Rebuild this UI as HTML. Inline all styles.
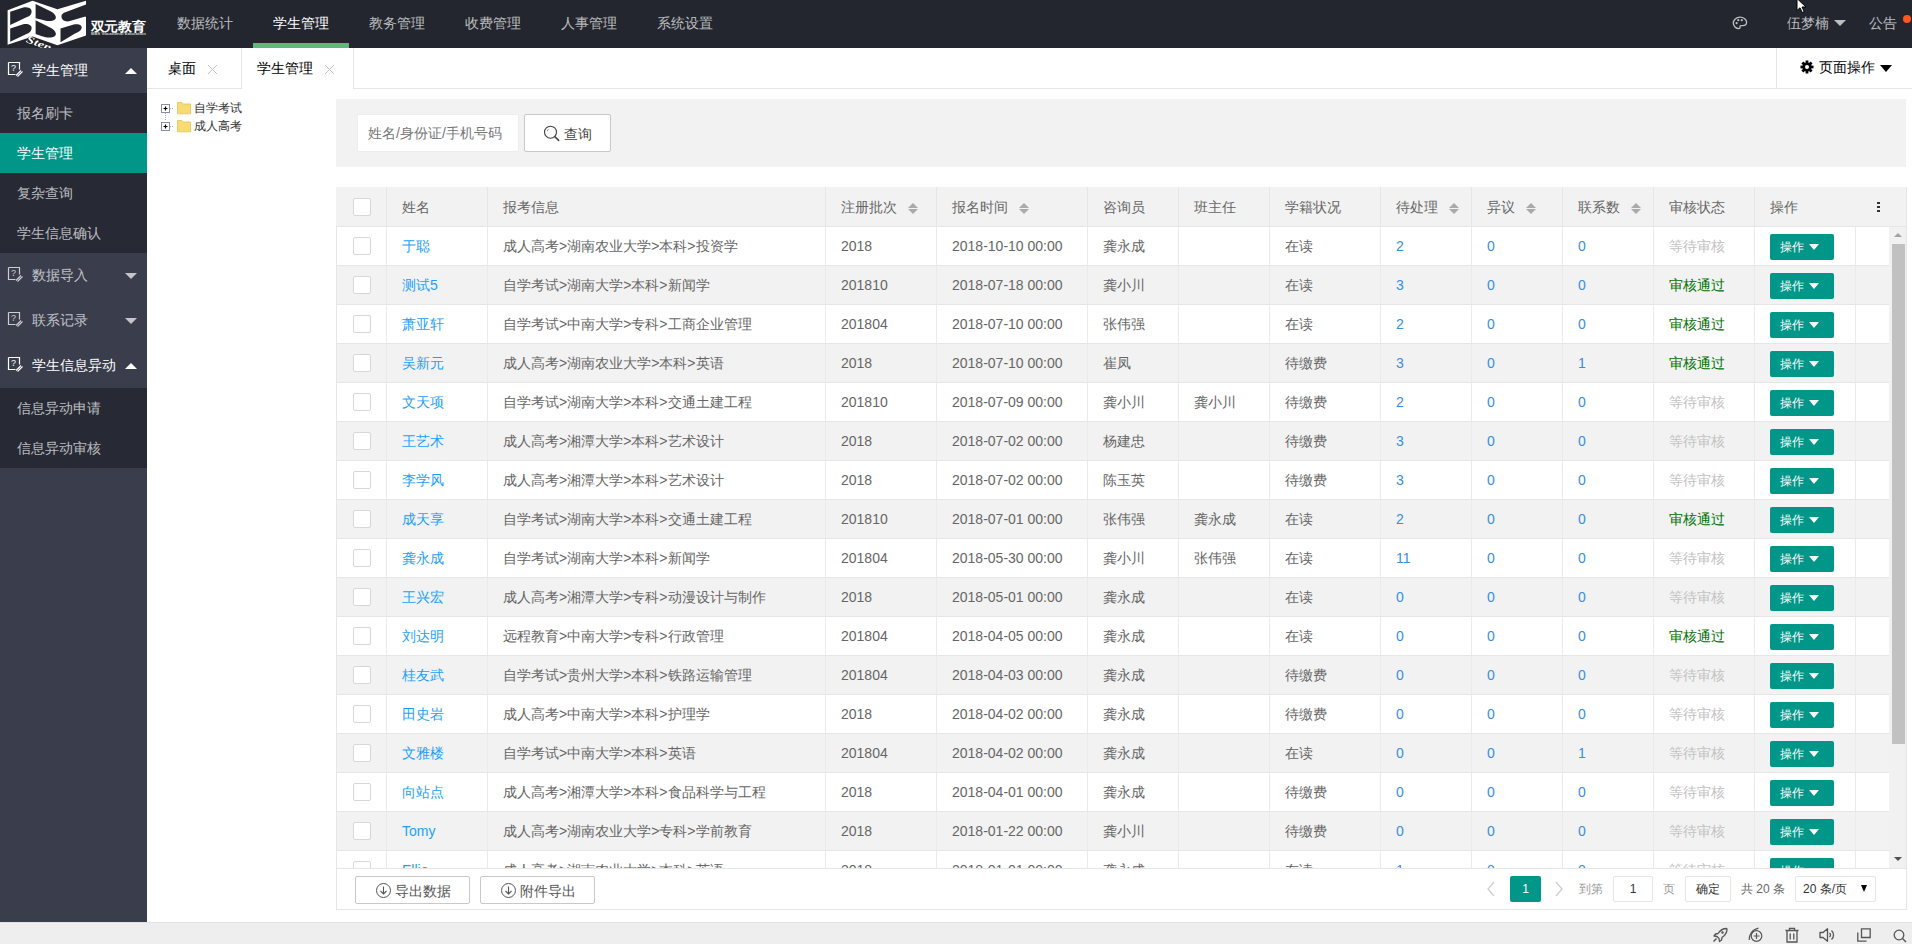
<!DOCTYPE html>
<html><head><meta charset="utf-8">
<style>
*{margin:0;padding:0;box-sizing:border-box}
html,body{width:1912px;height:944px;overflow:hidden;background:#fff;font-family:"Liberation Sans",sans-serif;font-size:14px;color:#666}
.abs{position:absolute}
#hdr{position:absolute;left:0;top:0;width:1912px;height:48px;background:#23262E}
.nav{position:absolute;top:0;height:48px;width:96px;line-height:46px;text-align:center;color:rgba(255,255,255,.7);font-size:14px}
.nav.on{color:#fff}
.nav.on:after{content:"";position:absolute;left:0;bottom:0;width:96px;height:5px;background:#5FB878}
#side{position:absolute;left:0;top:48px;width:147px;height:874px;background:#393D4C}
.pitem{position:absolute;left:0;width:147px;height:45px;line-height:45px;color:rgba(255,255,255,.7);font-size:14px}
.pitem.open{color:#fff}
.pitem span{position:absolute;left:32px;top:0}
.pitem svg{position:absolute;left:7px;top:13px}
.pitem .car{position:absolute;left:125px;top:20px;width:0;height:0;border-left:6px solid transparent;border-right:6px solid transparent}
.car.dn{border-top:6px solid rgba(255,255,255,.7)}
.car.up{border-bottom:6px solid #fff}
.citem{position:absolute;left:0;width:147px;height:40px;line-height:40px;padding-left:17px;color:rgba(255,255,255,.7);background:#272A35;font-size:14px}
.citem.on{background:#009688;color:#fff}
#foot{position:absolute;left:0;top:922px;width:1912px;height:22px;background:#eeeeee;border-top:1px solid #e2e2e2}
.thead{position:absolute;background:#f2f2f2}
.vl{position:absolute;width:1px;background:#e6e6e6}
.hl{position:absolute;height:1px;background:#e6e6e6}
.chk{position:absolute;width:18px;height:18px;border:1px solid #d8d8d8;background:#fff;border-radius:2px}
.th{position:absolute;height:39px;line-height:39px;color:#666;white-space:nowrap}
.sort{position:absolute;width:10px;height:14px}
.sort:before{content:"";position:absolute;left:0;top:0;border-left:5px solid transparent;border-right:5px solid transparent;border-bottom:5px solid #aaa}
.sort:after{content:"";position:absolute;left:0;top:6px;border-left:5px solid transparent;border-right:5px solid transparent;border-top:5px solid #aaa}
.dots{position:absolute;width:3px;height:12px;background:radial-gradient(circle,#333 1.2px,transparent 1.5px) 0 0/3px 4px}
.tbody{position:absolute;overflow:hidden}
.tr{position:absolute;left:0;width:1552px;height:38px}
.td{position:absolute;height:38px;line-height:38px;white-space:nowrap;color:#666}
.td.nm{color:#1E9FFF}
.td.num{color:#3a8ee6}
.td.ok{color:#007000}
.td.wait{color:#c2c2c2}
.opbtn{position:absolute;width:64px;height:26px;line-height:26px;background:#009688;color:#fff;font-size:12px;padding-left:10px;border-radius:2px;white-space:nowrap}
.opbtn i{position:absolute;left:39px;top:10px;width:0;height:0;border-left:5px solid transparent;border-right:5px solid transparent;border-top:6px solid #fff}
.btn{position:absolute;height:28px;line-height:26px;border:1px solid #c9c9c9;background:#fff;border-radius:2px;color:#555;font-size:14px;white-space:nowrap}
</style></head>
<body>
<div id="hdr">
  <svg class="abs" style="left:0;top:0" width="150" height="48" viewBox="0 0 150 48">
    <polygon points="7.6,10.2 32.5,0.8 57.4,9.2 86,0.8 86,35.6 57.4,45.3 32.5,36.6 7.6,44.8" fill="#fff"/>
    <g fill="#23262E">
    <path d="M10.2,11.8 L22.5,7.8 C29,6 33,9.5 31.2,13.5 C30.5,15.5 29,16.3 27,17 L10.2,24.9 Z"/>
    <path d="M10.2,28.5 L22.5,24.5 C29,23 33,26 31.2,30 C30.5,32 29,33 27,33.8 L10.2,41.7 Z"/>
    <path d="M35.6,4 L50,11 C57,14.5 57.5,19.5 53,20.5 C50,21.5 46,21 42,19.8 L35.6,18.3 Z"/>
    <path d="M35.6,20.3 L50,27.5 C57,31 57.5,36 53,37 C50,38 46,37.5 42,36.3 L35.6,34 Z"/>
    <path d="M61.5,17 C61,14.5 63,13 66,12 L86,4.5 L90,4.5 L90,16.8 L84.5,16.8 L69,21.3 C65,22 61.8,20 61.5,17 Z"/>
    <path d="M60.5,28.5 L73.7,24.4 C80,23.5 82.5,26 81.5,28.5 C80.5,31 78,32 75,33.5 L60.5,42.2 Z"/>
    </g>
    <text x="25.5" y="42" font-family="Liberation Serif" font-style="italic" font-weight="bold" font-size="10" fill="#fff" stroke="#000" stroke-width="0.5" paint-order="stroke" textLength="26" lengthAdjust="spacingAndGlyphs" transform="rotate(20 25.5 42)">Step</text>
    <text x="90.5" y="30.5" font-family="Liberation Sans" font-weight="bold" font-size="13.2" fill="#fff" textLength="55.5" lengthAdjust="spacingAndGlyphs">双元教育</text>
    <text x="91" y="35" font-family="Liberation Sans" font-weight="bold" font-size="3.8" fill="#ccc" textLength="55" lengthAdjust="spacingAndGlyphs">BBS Vocational Education</text>
  </svg>
  <div class="nav" style="left:157px">数据统计</div>
  <div class="nav on" style="left:253px">学生管理</div>
  <div class="nav" style="left:349px">教务管理</div>
  <div class="nav" style="left:445px">收费管理</div>
  <div class="nav" style="left:541px">人事管理</div>
  <div class="nav" style="left:637px">系统设置</div>
  <!-- palette icon -->
  <svg class="abs" style="left:1732px;top:16px" width="16" height="14" viewBox="0 0 16 14">
    <path d="M8 1.2C4.2 1.2 1.3 3.8 1.3 7c0 3 2.6 5.6 5.6 5.6.9 0 1.3-.6 1.1-1.3-.3-.9.2-1.7 1.1-1.7h1.6c2.3 0 3.9-1.6 3.9-3.4C14.6 3.4 11.6 1.2 8 1.2z" fill="none" stroke="rgba(255,255,255,.7)" stroke-width="1.3"/>
    <circle cx="4.6" cy="7.2" r="1.1" fill="rgba(255,255,255,.7)"/><circle cx="6.3" cy="4.2" r="1.1" fill="rgba(255,255,255,.7)"/><circle cx="9.8" cy="4.2" r="1.1" fill="rgba(255,255,255,.7)"/>
  </svg>
  <div class="abs" style="left:1787px;top:0;line-height:46px;color:rgba(255,255,255,.7)">伍梦楠</div>
  <div class="abs" style="left:1834px;top:20px;border-left:6px solid transparent;border-right:6px solid transparent;border-top:6px solid rgba(255,255,255,.7)"></div>
  <div class="abs" style="left:1869px;top:0;line-height:46px;color:rgba(255,255,255,.7)">公告</div>
  <div class="abs" style="left:1903px;top:15px;width:8px;height:8px;border-radius:50%;background:#FF5722"></div>
  <!-- cursor -->
  <svg class="abs" style="left:1796px;top:-2px" width="14" height="16" viewBox="0 0 14 16">
    <path d="M1 0.5 L1 12.5 L4 9.8 L6.2 14.5 L8.2 13.6 L6 9 L10 9 Z" fill="#fff" stroke="#000" stroke-width="1"/>
  </svg>
</div>

<div id="side">
  <div class="pitem open" style="top:0"><svg width="16" height="16" viewBox="0 0 16 16"><path d="M1.5 1.5h11v7M1.5 1.5v12h7" fill="none" stroke="#fff" stroke-width="1.2"/><text x="4" y="10" font-size="9" fill="#fff" font-family="Liberation Sans">?</text><path d="M9 14.5l5-5M10.5 15.5l5-5" stroke="#fff" stroke-width="1.1"/></svg><span>学生管理</span><i class="car up"></i></div>
  <div class="citem" style="top:45px">报名刷卡</div>
  <div class="citem on" style="top:85px">学生管理</div>
  <div class="citem" style="top:125px">复杂查询</div>
  <div class="citem" style="top:165px">学生信息确认</div>
  <div class="pitem" style="top:205px"><svg width="16" height="16" viewBox="0 0 16 16"><path d="M1.5 1.5h11v7M1.5 1.5v12h7" fill="none" stroke="rgba(255,255,255,.75)" stroke-width="1.2"/><text x="4" y="10" font-size="9" fill="rgba(255,255,255,.75)" font-family="Liberation Sans">?</text><path d="M9 14.5l5-5M10.5 15.5l5-5" stroke="rgba(255,255,255,.75)" stroke-width="1.1"/></svg><span>数据导入</span><i class="car dn"></i></div>
  <div class="pitem" style="top:250px"><svg width="16" height="16" viewBox="0 0 16 16"><path d="M1.5 1.5h11v7M1.5 1.5v12h7" fill="none" stroke="rgba(255,255,255,.75)" stroke-width="1.2"/><text x="4" y="10" font-size="9" fill="rgba(255,255,255,.75)" font-family="Liberation Sans">?</text><path d="M9 14.5l5-5M10.5 15.5l5-5" stroke="rgba(255,255,255,.75)" stroke-width="1.1"/></svg><span>联系记录</span><i class="car dn"></i></div>
  <div class="pitem open" style="top:295px"><svg width="16" height="16" viewBox="0 0 16 16"><path d="M1.5 1.5h11v7M1.5 1.5v12h7" fill="none" stroke="#fff" stroke-width="1.2"/><text x="4" y="10" font-size="9" fill="#fff" font-family="Liberation Sans">?</text><path d="M9 14.5l5-5M10.5 15.5l5-5" stroke="#fff" stroke-width="1.1"/></svg><span>学生信息异动</span><i class="car up"></i></div>
  <div class="citem" style="top:340px">信息异动申请</div>
  <div class="citem" style="top:380px">信息异动审核</div>
</div>

<!-- tab bar -->
<div class="abs" style="left:147px;top:88px;width:1765px;height:1px;background:#e6e6e6"></div>
<div class="abs" style="left:147px;top:48px;width:95px;height:40px;border-right:1px solid #e6e6e6"></div>
<div class="abs" style="left:168px;top:48px;line-height:40px;color:#000">桌面</div>
<div class="abs" style="left:207px;top:62px;width:11px;height:11px"><svg width="11" height="11"><path d="M1 1L10 10M10 1L1 10" stroke="#c2c2c2" stroke-width="1"/></svg></div>
<div class="abs" style="left:242px;top:48px;width:112px;height:41px;background:#fff;border-right:1px solid #e6e6e6"></div>
<div class="abs" style="left:257px;top:48px;line-height:40px;color:#000">学生管理</div>
<div class="abs" style="left:324px;top:62px;width:11px;height:11px"><svg width="11" height="11"><path d="M1 1L10 10M10 1L1 10" stroke="#c2c2c2" stroke-width="1"/></svg></div>
<div class="abs" style="left:1776px;top:48px;width:1px;height:40px;background:#e6e6e6"></div>
<svg class="abs" style="left:1800px;top:60px" width="14" height="14" viewBox="0 0 14 14"><g fill="#000"><circle cx="7" cy="7" r="4.6"/><rect x="5.6" y="0.5" width="2.8" height="13"/><rect x="0.5" y="5.6" width="13" height="2.8"/><rect x="5.6" y="0.5" width="2.8" height="13" transform="rotate(45 7 7)"/><rect x="5.6" y="0.5" width="2.8" height="13" transform="rotate(-45 7 7)"/></g><circle cx="7" cy="7" r="2" fill="#fff"/></svg>
<div class="abs" style="left:1819px;top:47px;line-height:40px;color:#000">页面操作</div>
<div class="abs" style="left:1880px;top:65px;border-left:6px solid transparent;border-right:6px solid transparent;border-top:7px solid #000"></div>

<!-- tree -->
<svg class="abs" style="left:160px;top:101px" width="35" height="34" viewBox="0 0 35 34">
  <path d="M5.5 12v7" stroke="#aab" stroke-dasharray="1 1"/>
  <path d="M10 7.5h3M10 25.5h3" stroke="#aab" stroke-dasharray="1 1"/>
  <rect x="1.5" y="3.5" width="8" height="8" fill="#fff" stroke="#8a8fa8"/><path d="M3.5 7.5h4M5.5 5.5v4" stroke="#000" stroke-width="1.2"/>
  <rect x="1.5" y="21.5" width="8" height="8" fill="#fff" stroke="#8a8fa8"/><path d="M3.5 25.5h4M5.5 23.5v4" stroke="#000" stroke-width="1.2"/>
  <path d="M17.5 1.5h4.5l1.2 1.5h7.3v9.8h-13z" fill="#f7dc74" stroke="#e8c050" stroke-width=".8"/>
  <path d="M17.5 19.5h4.5l1.2 1.5h7.3v9.8h-13z" fill="#f7dc74" stroke="#e8c050" stroke-width=".8"/>
</svg>
<div class="abs" style="left:194px;top:100px;font-size:12px;line-height:16px;color:#333">自学考试</div>
<div class="abs" style="left:194px;top:118px;font-size:12px;line-height:16px;color:#333">成人高考</div>

<!-- search panel -->
<div class="abs" style="left:336px;top:99px;width:1570px;height:68px;background:#f2f2f2"></div>
<div class="abs" style="left:357px;top:114px;width:162px;height:38px;background:#fff;border:1px solid #eee;border-radius:2px"></div>
<div class="abs" style="left:368px;top:114px;line-height:38px;color:#777">姓名/身份证/手机号码</div>
<div class="abs" style="left:524px;top:114px;width:87px;height:38px;background:#fff;border:1px solid #c9c9c9;border-radius:2px"></div>
<svg class="abs" style="left:543px;top:125px" width="18" height="18" viewBox="0 0 18 18"><circle cx="7.5" cy="7.2" r="6" fill="none" stroke="#444" stroke-width="1.1"/><path d="M11.8 11.6l4.3 4.3" stroke="#444" stroke-width="1.5"/><path d="M4.3 6.2a3.3 3.3 0 0 1 1.2-2" fill="none" stroke="#666" stroke-width=".8"/></svg>
<div class="abs" style="left:564px;top:115px;line-height:38px;color:#444">查询</div>

<!-- table outer border -->
<div class="abs" style="left:336px;top:187px;width:1571px;height:723px;border:1px solid #e6e6e6"></div>
<div class="thead" style="left:336px;top:187px;width:1570px;height:39px"></div>
<div class="vl" style="left:386px;top:187px;height:39px"></div>
<div class="vl" style="left:487px;top:187px;height:39px"></div>
<div class="vl" style="left:825px;top:187px;height:39px"></div>
<div class="vl" style="left:936px;top:187px;height:39px"></div>
<div class="vl" style="left:1087px;top:187px;height:39px"></div>
<div class="vl" style="left:1178px;top:187px;height:39px"></div>
<div class="vl" style="left:1269px;top:187px;height:39px"></div>
<div class="vl" style="left:1380px;top:187px;height:39px"></div>
<div class="vl" style="left:1471px;top:187px;height:39px"></div>
<div class="vl" style="left:1562px;top:187px;height:39px"></div>
<div class="vl" style="left:1653px;top:187px;height:39px"></div>
<div class="vl" style="left:1754px;top:187px;height:39px"></div>
<div class="chk" style="left:353px;top:198px"></div>
<div class="th" style="left:402px;top:188px">姓名</div>
<div class="th" style="left:503px;top:188px">报考信息</div>
<div class="th" style="left:841px;top:188px">注册批次</div>
<div class="sort" style="left:908px;top:203px"></div>
<div class="th" style="left:952px;top:188px">报名时间</div>
<div class="sort" style="left:1019px;top:203px"></div>
<div class="th" style="left:1103px;top:188px">咨询员</div>
<div class="th" style="left:1194px;top:188px">班主任</div>
<div class="th" style="left:1285px;top:188px">学籍状况</div>
<div class="th" style="left:1396px;top:188px">待处理</div>
<div class="sort" style="left:1449px;top:203px"></div>
<div class="th" style="left:1487px;top:188px">异议</div>
<div class="sort" style="left:1526px;top:203px"></div>
<div class="th" style="left:1578px;top:188px">联系数</div>
<div class="sort" style="left:1631px;top:203px"></div>
<div class="th" style="left:1669px;top:188px">审核状态</div>
<div class="th" style="left:1770px;top:188px">操作</div>
<div class="dots" style="left:1877px;top:201px"></div>
<div class="hl" style="left:336px;top:226px;width:1570px"></div>
<div class="tbody" style="left:337px;top:227px;width:1552px;height:641px"><div class="tr" style="top:0px;background:#fff"></div><div class="vl" style="left:49px;top:0px;height:38px;background:#ebebeb"></div><div class="vl" style="left:150px;top:0px;height:38px;background:#ebebeb"></div><div class="vl" style="left:488px;top:0px;height:38px;background:#ebebeb"></div><div class="vl" style="left:599px;top:0px;height:38px;background:#ebebeb"></div><div class="vl" style="left:750px;top:0px;height:38px;background:#ebebeb"></div><div class="vl" style="left:841px;top:0px;height:38px;background:#ebebeb"></div><div class="vl" style="left:932px;top:0px;height:38px;background:#ebebeb"></div><div class="vl" style="left:1043px;top:0px;height:38px;background:#ebebeb"></div><div class="vl" style="left:1134px;top:0px;height:38px;background:#ebebeb"></div><div class="vl" style="left:1225px;top:0px;height:38px;background:#ebebeb"></div><div class="vl" style="left:1316px;top:0px;height:38px;background:#ebebeb"></div><div class="vl" style="left:1417px;top:0px;height:38px;background:#ebebeb"></div><div class="vl" style="left:1518px;top:0px;height:38px;background:#ebebeb"></div><div class="hl" style="left:0;top:38px;width:1552px"></div><div class="chk" style="left:16px;top:10px"></div><div class="td nm" style="left:65px;top:0px">于聪</div><div class="td" style="left:166px;top:0px">成人高考&gt;湖南农业大学&gt;本科&gt;投资学</div><div class="td" style="left:504px;top:0px">2018</div><div class="td" style="left:615px;top:0px">2018-10-10 00:00</div><div class="td" style="left:766px;top:0px">龚永成</div><div class="td" style="left:857px;top:0px"></div><div class="td" style="left:948px;top:0px">在读</div><div class="td num" style="left:1059px;top:0px">2</div><div class="td num" style="left:1150px;top:0px">0</div><div class="td num" style="left:1241px;top:0px">0</div><div class="td wait" style="left:1332px;top:0px">等待审核</div><div class="opbtn" style="left:1433px;top:7px">操作<i></i></div><div class="tr" style="top:39px;background:#f2f2f2"></div><div class="vl" style="left:49px;top:39px;height:38px;background:#ebebeb"></div><div class="vl" style="left:150px;top:39px;height:38px;background:#ebebeb"></div><div class="vl" style="left:488px;top:39px;height:38px;background:#ebebeb"></div><div class="vl" style="left:599px;top:39px;height:38px;background:#ebebeb"></div><div class="vl" style="left:750px;top:39px;height:38px;background:#ebebeb"></div><div class="vl" style="left:841px;top:39px;height:38px;background:#ebebeb"></div><div class="vl" style="left:932px;top:39px;height:38px;background:#ebebeb"></div><div class="vl" style="left:1043px;top:39px;height:38px;background:#ebebeb"></div><div class="vl" style="left:1134px;top:39px;height:38px;background:#ebebeb"></div><div class="vl" style="left:1225px;top:39px;height:38px;background:#ebebeb"></div><div class="vl" style="left:1316px;top:39px;height:38px;background:#ebebeb"></div><div class="vl" style="left:1417px;top:39px;height:38px;background:#ebebeb"></div><div class="vl" style="left:1518px;top:39px;height:38px;background:#ebebeb"></div><div class="hl" style="left:0;top:77px;width:1552px"></div><div class="chk" style="left:16px;top:49px"></div><div class="td nm" style="left:65px;top:39px">测试5</div><div class="td" style="left:166px;top:39px">自学考试&gt;湖南大学&gt;本科&gt;新闻学</div><div class="td" style="left:504px;top:39px">201810</div><div class="td" style="left:615px;top:39px">2018-07-18 00:00</div><div class="td" style="left:766px;top:39px">龚小川</div><div class="td" style="left:857px;top:39px"></div><div class="td" style="left:948px;top:39px">在读</div><div class="td num" style="left:1059px;top:39px">3</div><div class="td num" style="left:1150px;top:39px">0</div><div class="td num" style="left:1241px;top:39px">0</div><div class="td ok" style="left:1332px;top:39px">审核通过</div><div class="opbtn" style="left:1433px;top:46px">操作<i></i></div><div class="tr" style="top:78px;background:#fff"></div><div class="vl" style="left:49px;top:78px;height:38px;background:#ebebeb"></div><div class="vl" style="left:150px;top:78px;height:38px;background:#ebebeb"></div><div class="vl" style="left:488px;top:78px;height:38px;background:#ebebeb"></div><div class="vl" style="left:599px;top:78px;height:38px;background:#ebebeb"></div><div class="vl" style="left:750px;top:78px;height:38px;background:#ebebeb"></div><div class="vl" style="left:841px;top:78px;height:38px;background:#ebebeb"></div><div class="vl" style="left:932px;top:78px;height:38px;background:#ebebeb"></div><div class="vl" style="left:1043px;top:78px;height:38px;background:#ebebeb"></div><div class="vl" style="left:1134px;top:78px;height:38px;background:#ebebeb"></div><div class="vl" style="left:1225px;top:78px;height:38px;background:#ebebeb"></div><div class="vl" style="left:1316px;top:78px;height:38px;background:#ebebeb"></div><div class="vl" style="left:1417px;top:78px;height:38px;background:#ebebeb"></div><div class="vl" style="left:1518px;top:78px;height:38px;background:#ebebeb"></div><div class="hl" style="left:0;top:116px;width:1552px"></div><div class="chk" style="left:16px;top:88px"></div><div class="td nm" style="left:65px;top:78px">萧亚轩</div><div class="td" style="left:166px;top:78px">自学考试&gt;中南大学&gt;专科&gt;工商企业管理</div><div class="td" style="left:504px;top:78px">201804</div><div class="td" style="left:615px;top:78px">2018-07-10 00:00</div><div class="td" style="left:766px;top:78px">张伟强</div><div class="td" style="left:857px;top:78px"></div><div class="td" style="left:948px;top:78px">在读</div><div class="td num" style="left:1059px;top:78px">2</div><div class="td num" style="left:1150px;top:78px">0</div><div class="td num" style="left:1241px;top:78px">0</div><div class="td ok" style="left:1332px;top:78px">审核通过</div><div class="opbtn" style="left:1433px;top:85px">操作<i></i></div><div class="tr" style="top:117px;background:#f2f2f2"></div><div class="vl" style="left:49px;top:117px;height:38px;background:#ebebeb"></div><div class="vl" style="left:150px;top:117px;height:38px;background:#ebebeb"></div><div class="vl" style="left:488px;top:117px;height:38px;background:#ebebeb"></div><div class="vl" style="left:599px;top:117px;height:38px;background:#ebebeb"></div><div class="vl" style="left:750px;top:117px;height:38px;background:#ebebeb"></div><div class="vl" style="left:841px;top:117px;height:38px;background:#ebebeb"></div><div class="vl" style="left:932px;top:117px;height:38px;background:#ebebeb"></div><div class="vl" style="left:1043px;top:117px;height:38px;background:#ebebeb"></div><div class="vl" style="left:1134px;top:117px;height:38px;background:#ebebeb"></div><div class="vl" style="left:1225px;top:117px;height:38px;background:#ebebeb"></div><div class="vl" style="left:1316px;top:117px;height:38px;background:#ebebeb"></div><div class="vl" style="left:1417px;top:117px;height:38px;background:#ebebeb"></div><div class="vl" style="left:1518px;top:117px;height:38px;background:#ebebeb"></div><div class="hl" style="left:0;top:155px;width:1552px"></div><div class="chk" style="left:16px;top:127px"></div><div class="td nm" style="left:65px;top:117px">吴新元</div><div class="td" style="left:166px;top:117px">成人高考&gt;湖南农业大学&gt;本科&gt;英语</div><div class="td" style="left:504px;top:117px">2018</div><div class="td" style="left:615px;top:117px">2018-07-10 00:00</div><div class="td" style="left:766px;top:117px">崔凤</div><div class="td" style="left:857px;top:117px"></div><div class="td" style="left:948px;top:117px">待缴费</div><div class="td num" style="left:1059px;top:117px">3</div><div class="td num" style="left:1150px;top:117px">0</div><div class="td num" style="left:1241px;top:117px">1</div><div class="td ok" style="left:1332px;top:117px">审核通过</div><div class="opbtn" style="left:1433px;top:124px">操作<i></i></div><div class="tr" style="top:156px;background:#fff"></div><div class="vl" style="left:49px;top:156px;height:38px;background:#ebebeb"></div><div class="vl" style="left:150px;top:156px;height:38px;background:#ebebeb"></div><div class="vl" style="left:488px;top:156px;height:38px;background:#ebebeb"></div><div class="vl" style="left:599px;top:156px;height:38px;background:#ebebeb"></div><div class="vl" style="left:750px;top:156px;height:38px;background:#ebebeb"></div><div class="vl" style="left:841px;top:156px;height:38px;background:#ebebeb"></div><div class="vl" style="left:932px;top:156px;height:38px;background:#ebebeb"></div><div class="vl" style="left:1043px;top:156px;height:38px;background:#ebebeb"></div><div class="vl" style="left:1134px;top:156px;height:38px;background:#ebebeb"></div><div class="vl" style="left:1225px;top:156px;height:38px;background:#ebebeb"></div><div class="vl" style="left:1316px;top:156px;height:38px;background:#ebebeb"></div><div class="vl" style="left:1417px;top:156px;height:38px;background:#ebebeb"></div><div class="vl" style="left:1518px;top:156px;height:38px;background:#ebebeb"></div><div class="hl" style="left:0;top:194px;width:1552px"></div><div class="chk" style="left:16px;top:166px"></div><div class="td nm" style="left:65px;top:156px">文天项</div><div class="td" style="left:166px;top:156px">自学考试&gt;湖南大学&gt;本科&gt;交通土建工程</div><div class="td" style="left:504px;top:156px">201810</div><div class="td" style="left:615px;top:156px">2018-07-09 00:00</div><div class="td" style="left:766px;top:156px">龚小川</div><div class="td" style="left:857px;top:156px">龚小川</div><div class="td" style="left:948px;top:156px">待缴费</div><div class="td num" style="left:1059px;top:156px">2</div><div class="td num" style="left:1150px;top:156px">0</div><div class="td num" style="left:1241px;top:156px">0</div><div class="td wait" style="left:1332px;top:156px">等待审核</div><div class="opbtn" style="left:1433px;top:163px">操作<i></i></div><div class="tr" style="top:195px;background:#f2f2f2"></div><div class="vl" style="left:49px;top:195px;height:38px;background:#ebebeb"></div><div class="vl" style="left:150px;top:195px;height:38px;background:#ebebeb"></div><div class="vl" style="left:488px;top:195px;height:38px;background:#ebebeb"></div><div class="vl" style="left:599px;top:195px;height:38px;background:#ebebeb"></div><div class="vl" style="left:750px;top:195px;height:38px;background:#ebebeb"></div><div class="vl" style="left:841px;top:195px;height:38px;background:#ebebeb"></div><div class="vl" style="left:932px;top:195px;height:38px;background:#ebebeb"></div><div class="vl" style="left:1043px;top:195px;height:38px;background:#ebebeb"></div><div class="vl" style="left:1134px;top:195px;height:38px;background:#ebebeb"></div><div class="vl" style="left:1225px;top:195px;height:38px;background:#ebebeb"></div><div class="vl" style="left:1316px;top:195px;height:38px;background:#ebebeb"></div><div class="vl" style="left:1417px;top:195px;height:38px;background:#ebebeb"></div><div class="vl" style="left:1518px;top:195px;height:38px;background:#ebebeb"></div><div class="hl" style="left:0;top:233px;width:1552px"></div><div class="chk" style="left:16px;top:205px"></div><div class="td nm" style="left:65px;top:195px">王艺术</div><div class="td" style="left:166px;top:195px">成人高考&gt;湘潭大学&gt;本科&gt;艺术设计</div><div class="td" style="left:504px;top:195px">2018</div><div class="td" style="left:615px;top:195px">2018-07-02 00:00</div><div class="td" style="left:766px;top:195px">杨建忠</div><div class="td" style="left:857px;top:195px"></div><div class="td" style="left:948px;top:195px">待缴费</div><div class="td num" style="left:1059px;top:195px">3</div><div class="td num" style="left:1150px;top:195px">0</div><div class="td num" style="left:1241px;top:195px">0</div><div class="td wait" style="left:1332px;top:195px">等待审核</div><div class="opbtn" style="left:1433px;top:202px">操作<i></i></div><div class="tr" style="top:234px;background:#fff"></div><div class="vl" style="left:49px;top:234px;height:38px;background:#ebebeb"></div><div class="vl" style="left:150px;top:234px;height:38px;background:#ebebeb"></div><div class="vl" style="left:488px;top:234px;height:38px;background:#ebebeb"></div><div class="vl" style="left:599px;top:234px;height:38px;background:#ebebeb"></div><div class="vl" style="left:750px;top:234px;height:38px;background:#ebebeb"></div><div class="vl" style="left:841px;top:234px;height:38px;background:#ebebeb"></div><div class="vl" style="left:932px;top:234px;height:38px;background:#ebebeb"></div><div class="vl" style="left:1043px;top:234px;height:38px;background:#ebebeb"></div><div class="vl" style="left:1134px;top:234px;height:38px;background:#ebebeb"></div><div class="vl" style="left:1225px;top:234px;height:38px;background:#ebebeb"></div><div class="vl" style="left:1316px;top:234px;height:38px;background:#ebebeb"></div><div class="vl" style="left:1417px;top:234px;height:38px;background:#ebebeb"></div><div class="vl" style="left:1518px;top:234px;height:38px;background:#ebebeb"></div><div class="hl" style="left:0;top:272px;width:1552px"></div><div class="chk" style="left:16px;top:244px"></div><div class="td nm" style="left:65px;top:234px">李学风</div><div class="td" style="left:166px;top:234px">成人高考&gt;湘潭大学&gt;本科&gt;艺术设计</div><div class="td" style="left:504px;top:234px">2018</div><div class="td" style="left:615px;top:234px">2018-07-02 00:00</div><div class="td" style="left:766px;top:234px">陈玉英</div><div class="td" style="left:857px;top:234px"></div><div class="td" style="left:948px;top:234px">待缴费</div><div class="td num" style="left:1059px;top:234px">3</div><div class="td num" style="left:1150px;top:234px">0</div><div class="td num" style="left:1241px;top:234px">0</div><div class="td wait" style="left:1332px;top:234px">等待审核</div><div class="opbtn" style="left:1433px;top:241px">操作<i></i></div><div class="tr" style="top:273px;background:#f2f2f2"></div><div class="vl" style="left:49px;top:273px;height:38px;background:#ebebeb"></div><div class="vl" style="left:150px;top:273px;height:38px;background:#ebebeb"></div><div class="vl" style="left:488px;top:273px;height:38px;background:#ebebeb"></div><div class="vl" style="left:599px;top:273px;height:38px;background:#ebebeb"></div><div class="vl" style="left:750px;top:273px;height:38px;background:#ebebeb"></div><div class="vl" style="left:841px;top:273px;height:38px;background:#ebebeb"></div><div class="vl" style="left:932px;top:273px;height:38px;background:#ebebeb"></div><div class="vl" style="left:1043px;top:273px;height:38px;background:#ebebeb"></div><div class="vl" style="left:1134px;top:273px;height:38px;background:#ebebeb"></div><div class="vl" style="left:1225px;top:273px;height:38px;background:#ebebeb"></div><div class="vl" style="left:1316px;top:273px;height:38px;background:#ebebeb"></div><div class="vl" style="left:1417px;top:273px;height:38px;background:#ebebeb"></div><div class="vl" style="left:1518px;top:273px;height:38px;background:#ebebeb"></div><div class="hl" style="left:0;top:311px;width:1552px"></div><div class="chk" style="left:16px;top:283px"></div><div class="td nm" style="left:65px;top:273px">成天享</div><div class="td" style="left:166px;top:273px">自学考试&gt;湖南大学&gt;本科&gt;交通土建工程</div><div class="td" style="left:504px;top:273px">201810</div><div class="td" style="left:615px;top:273px">2018-07-01 00:00</div><div class="td" style="left:766px;top:273px">张伟强</div><div class="td" style="left:857px;top:273px">龚永成</div><div class="td" style="left:948px;top:273px">在读</div><div class="td num" style="left:1059px;top:273px">2</div><div class="td num" style="left:1150px;top:273px">0</div><div class="td num" style="left:1241px;top:273px">0</div><div class="td ok" style="left:1332px;top:273px">审核通过</div><div class="opbtn" style="left:1433px;top:280px">操作<i></i></div><div class="tr" style="top:312px;background:#fff"></div><div class="vl" style="left:49px;top:312px;height:38px;background:#ebebeb"></div><div class="vl" style="left:150px;top:312px;height:38px;background:#ebebeb"></div><div class="vl" style="left:488px;top:312px;height:38px;background:#ebebeb"></div><div class="vl" style="left:599px;top:312px;height:38px;background:#ebebeb"></div><div class="vl" style="left:750px;top:312px;height:38px;background:#ebebeb"></div><div class="vl" style="left:841px;top:312px;height:38px;background:#ebebeb"></div><div class="vl" style="left:932px;top:312px;height:38px;background:#ebebeb"></div><div class="vl" style="left:1043px;top:312px;height:38px;background:#ebebeb"></div><div class="vl" style="left:1134px;top:312px;height:38px;background:#ebebeb"></div><div class="vl" style="left:1225px;top:312px;height:38px;background:#ebebeb"></div><div class="vl" style="left:1316px;top:312px;height:38px;background:#ebebeb"></div><div class="vl" style="left:1417px;top:312px;height:38px;background:#ebebeb"></div><div class="vl" style="left:1518px;top:312px;height:38px;background:#ebebeb"></div><div class="hl" style="left:0;top:350px;width:1552px"></div><div class="chk" style="left:16px;top:322px"></div><div class="td nm" style="left:65px;top:312px">龚永成</div><div class="td" style="left:166px;top:312px">自学考试&gt;湖南大学&gt;本科&gt;新闻学</div><div class="td" style="left:504px;top:312px">201804</div><div class="td" style="left:615px;top:312px">2018-05-30 00:00</div><div class="td" style="left:766px;top:312px">龚小川</div><div class="td" style="left:857px;top:312px">张伟强</div><div class="td" style="left:948px;top:312px">在读</div><div class="td num" style="left:1059px;top:312px">11</div><div class="td num" style="left:1150px;top:312px">0</div><div class="td num" style="left:1241px;top:312px">0</div><div class="td wait" style="left:1332px;top:312px">等待审核</div><div class="opbtn" style="left:1433px;top:319px">操作<i></i></div><div class="tr" style="top:351px;background:#f2f2f2"></div><div class="vl" style="left:49px;top:351px;height:38px;background:#ebebeb"></div><div class="vl" style="left:150px;top:351px;height:38px;background:#ebebeb"></div><div class="vl" style="left:488px;top:351px;height:38px;background:#ebebeb"></div><div class="vl" style="left:599px;top:351px;height:38px;background:#ebebeb"></div><div class="vl" style="left:750px;top:351px;height:38px;background:#ebebeb"></div><div class="vl" style="left:841px;top:351px;height:38px;background:#ebebeb"></div><div class="vl" style="left:932px;top:351px;height:38px;background:#ebebeb"></div><div class="vl" style="left:1043px;top:351px;height:38px;background:#ebebeb"></div><div class="vl" style="left:1134px;top:351px;height:38px;background:#ebebeb"></div><div class="vl" style="left:1225px;top:351px;height:38px;background:#ebebeb"></div><div class="vl" style="left:1316px;top:351px;height:38px;background:#ebebeb"></div><div class="vl" style="left:1417px;top:351px;height:38px;background:#ebebeb"></div><div class="vl" style="left:1518px;top:351px;height:38px;background:#ebebeb"></div><div class="hl" style="left:0;top:389px;width:1552px"></div><div class="chk" style="left:16px;top:361px"></div><div class="td nm" style="left:65px;top:351px">王兴宏</div><div class="td" style="left:166px;top:351px">成人高考&gt;湘潭大学&gt;专科&gt;动漫设计与制作</div><div class="td" style="left:504px;top:351px">2018</div><div class="td" style="left:615px;top:351px">2018-05-01 00:00</div><div class="td" style="left:766px;top:351px">龚永成</div><div class="td" style="left:857px;top:351px"></div><div class="td" style="left:948px;top:351px">在读</div><div class="td num" style="left:1059px;top:351px">0</div><div class="td num" style="left:1150px;top:351px">0</div><div class="td num" style="left:1241px;top:351px">0</div><div class="td wait" style="left:1332px;top:351px">等待审核</div><div class="opbtn" style="left:1433px;top:358px">操作<i></i></div><div class="tr" style="top:390px;background:#fff"></div><div class="vl" style="left:49px;top:390px;height:38px;background:#ebebeb"></div><div class="vl" style="left:150px;top:390px;height:38px;background:#ebebeb"></div><div class="vl" style="left:488px;top:390px;height:38px;background:#ebebeb"></div><div class="vl" style="left:599px;top:390px;height:38px;background:#ebebeb"></div><div class="vl" style="left:750px;top:390px;height:38px;background:#ebebeb"></div><div class="vl" style="left:841px;top:390px;height:38px;background:#ebebeb"></div><div class="vl" style="left:932px;top:390px;height:38px;background:#ebebeb"></div><div class="vl" style="left:1043px;top:390px;height:38px;background:#ebebeb"></div><div class="vl" style="left:1134px;top:390px;height:38px;background:#ebebeb"></div><div class="vl" style="left:1225px;top:390px;height:38px;background:#ebebeb"></div><div class="vl" style="left:1316px;top:390px;height:38px;background:#ebebeb"></div><div class="vl" style="left:1417px;top:390px;height:38px;background:#ebebeb"></div><div class="vl" style="left:1518px;top:390px;height:38px;background:#ebebeb"></div><div class="hl" style="left:0;top:428px;width:1552px"></div><div class="chk" style="left:16px;top:400px"></div><div class="td nm" style="left:65px;top:390px">刘达明</div><div class="td" style="left:166px;top:390px">远程教育&gt;中南大学&gt;专科&gt;行政管理</div><div class="td" style="left:504px;top:390px">201804</div><div class="td" style="left:615px;top:390px">2018-04-05 00:00</div><div class="td" style="left:766px;top:390px">龚永成</div><div class="td" style="left:857px;top:390px"></div><div class="td" style="left:948px;top:390px">在读</div><div class="td num" style="left:1059px;top:390px">0</div><div class="td num" style="left:1150px;top:390px">0</div><div class="td num" style="left:1241px;top:390px">0</div><div class="td ok" style="left:1332px;top:390px">审核通过</div><div class="opbtn" style="left:1433px;top:397px">操作<i></i></div><div class="tr" style="top:429px;background:#f2f2f2"></div><div class="vl" style="left:49px;top:429px;height:38px;background:#ebebeb"></div><div class="vl" style="left:150px;top:429px;height:38px;background:#ebebeb"></div><div class="vl" style="left:488px;top:429px;height:38px;background:#ebebeb"></div><div class="vl" style="left:599px;top:429px;height:38px;background:#ebebeb"></div><div class="vl" style="left:750px;top:429px;height:38px;background:#ebebeb"></div><div class="vl" style="left:841px;top:429px;height:38px;background:#ebebeb"></div><div class="vl" style="left:932px;top:429px;height:38px;background:#ebebeb"></div><div class="vl" style="left:1043px;top:429px;height:38px;background:#ebebeb"></div><div class="vl" style="left:1134px;top:429px;height:38px;background:#ebebeb"></div><div class="vl" style="left:1225px;top:429px;height:38px;background:#ebebeb"></div><div class="vl" style="left:1316px;top:429px;height:38px;background:#ebebeb"></div><div class="vl" style="left:1417px;top:429px;height:38px;background:#ebebeb"></div><div class="vl" style="left:1518px;top:429px;height:38px;background:#ebebeb"></div><div class="hl" style="left:0;top:467px;width:1552px"></div><div class="chk" style="left:16px;top:439px"></div><div class="td nm" style="left:65px;top:429px">桂友武</div><div class="td" style="left:166px;top:429px">自学考试&gt;贵州大学&gt;本科&gt;铁路运输管理</div><div class="td" style="left:504px;top:429px">201804</div><div class="td" style="left:615px;top:429px">2018-04-03 00:00</div><div class="td" style="left:766px;top:429px">龚永成</div><div class="td" style="left:857px;top:429px"></div><div class="td" style="left:948px;top:429px">待缴费</div><div class="td num" style="left:1059px;top:429px">0</div><div class="td num" style="left:1150px;top:429px">0</div><div class="td num" style="left:1241px;top:429px">0</div><div class="td wait" style="left:1332px;top:429px">等待审核</div><div class="opbtn" style="left:1433px;top:436px">操作<i></i></div><div class="tr" style="top:468px;background:#fff"></div><div class="vl" style="left:49px;top:468px;height:38px;background:#ebebeb"></div><div class="vl" style="left:150px;top:468px;height:38px;background:#ebebeb"></div><div class="vl" style="left:488px;top:468px;height:38px;background:#ebebeb"></div><div class="vl" style="left:599px;top:468px;height:38px;background:#ebebeb"></div><div class="vl" style="left:750px;top:468px;height:38px;background:#ebebeb"></div><div class="vl" style="left:841px;top:468px;height:38px;background:#ebebeb"></div><div class="vl" style="left:932px;top:468px;height:38px;background:#ebebeb"></div><div class="vl" style="left:1043px;top:468px;height:38px;background:#ebebeb"></div><div class="vl" style="left:1134px;top:468px;height:38px;background:#ebebeb"></div><div class="vl" style="left:1225px;top:468px;height:38px;background:#ebebeb"></div><div class="vl" style="left:1316px;top:468px;height:38px;background:#ebebeb"></div><div class="vl" style="left:1417px;top:468px;height:38px;background:#ebebeb"></div><div class="vl" style="left:1518px;top:468px;height:38px;background:#ebebeb"></div><div class="hl" style="left:0;top:506px;width:1552px"></div><div class="chk" style="left:16px;top:478px"></div><div class="td nm" style="left:65px;top:468px">田史岩</div><div class="td" style="left:166px;top:468px">成人高考&gt;中南大学&gt;本科&gt;护理学</div><div class="td" style="left:504px;top:468px">2018</div><div class="td" style="left:615px;top:468px">2018-04-02 00:00</div><div class="td" style="left:766px;top:468px">龚永成</div><div class="td" style="left:857px;top:468px"></div><div class="td" style="left:948px;top:468px">待缴费</div><div class="td num" style="left:1059px;top:468px">0</div><div class="td num" style="left:1150px;top:468px">0</div><div class="td num" style="left:1241px;top:468px">0</div><div class="td wait" style="left:1332px;top:468px">等待审核</div><div class="opbtn" style="left:1433px;top:475px">操作<i></i></div><div class="tr" style="top:507px;background:#f2f2f2"></div><div class="vl" style="left:49px;top:507px;height:38px;background:#ebebeb"></div><div class="vl" style="left:150px;top:507px;height:38px;background:#ebebeb"></div><div class="vl" style="left:488px;top:507px;height:38px;background:#ebebeb"></div><div class="vl" style="left:599px;top:507px;height:38px;background:#ebebeb"></div><div class="vl" style="left:750px;top:507px;height:38px;background:#ebebeb"></div><div class="vl" style="left:841px;top:507px;height:38px;background:#ebebeb"></div><div class="vl" style="left:932px;top:507px;height:38px;background:#ebebeb"></div><div class="vl" style="left:1043px;top:507px;height:38px;background:#ebebeb"></div><div class="vl" style="left:1134px;top:507px;height:38px;background:#ebebeb"></div><div class="vl" style="left:1225px;top:507px;height:38px;background:#ebebeb"></div><div class="vl" style="left:1316px;top:507px;height:38px;background:#ebebeb"></div><div class="vl" style="left:1417px;top:507px;height:38px;background:#ebebeb"></div><div class="vl" style="left:1518px;top:507px;height:38px;background:#ebebeb"></div><div class="hl" style="left:0;top:545px;width:1552px"></div><div class="chk" style="left:16px;top:517px"></div><div class="td nm" style="left:65px;top:507px">文雅楼</div><div class="td" style="left:166px;top:507px">自学考试&gt;中南大学&gt;本科&gt;英语</div><div class="td" style="left:504px;top:507px">201804</div><div class="td" style="left:615px;top:507px">2018-04-02 00:00</div><div class="td" style="left:766px;top:507px">龚永成</div><div class="td" style="left:857px;top:507px"></div><div class="td" style="left:948px;top:507px">在读</div><div class="td num" style="left:1059px;top:507px">0</div><div class="td num" style="left:1150px;top:507px">0</div><div class="td num" style="left:1241px;top:507px">1</div><div class="td wait" style="left:1332px;top:507px">等待审核</div><div class="opbtn" style="left:1433px;top:514px">操作<i></i></div><div class="tr" style="top:546px;background:#fff"></div><div class="vl" style="left:49px;top:546px;height:38px;background:#ebebeb"></div><div class="vl" style="left:150px;top:546px;height:38px;background:#ebebeb"></div><div class="vl" style="left:488px;top:546px;height:38px;background:#ebebeb"></div><div class="vl" style="left:599px;top:546px;height:38px;background:#ebebeb"></div><div class="vl" style="left:750px;top:546px;height:38px;background:#ebebeb"></div><div class="vl" style="left:841px;top:546px;height:38px;background:#ebebeb"></div><div class="vl" style="left:932px;top:546px;height:38px;background:#ebebeb"></div><div class="vl" style="left:1043px;top:546px;height:38px;background:#ebebeb"></div><div class="vl" style="left:1134px;top:546px;height:38px;background:#ebebeb"></div><div class="vl" style="left:1225px;top:546px;height:38px;background:#ebebeb"></div><div class="vl" style="left:1316px;top:546px;height:38px;background:#ebebeb"></div><div class="vl" style="left:1417px;top:546px;height:38px;background:#ebebeb"></div><div class="vl" style="left:1518px;top:546px;height:38px;background:#ebebeb"></div><div class="hl" style="left:0;top:584px;width:1552px"></div><div class="chk" style="left:16px;top:556px"></div><div class="td nm" style="left:65px;top:546px">向站点</div><div class="td" style="left:166px;top:546px">成人高考&gt;湘潭大学&gt;本科&gt;食品科学与工程</div><div class="td" style="left:504px;top:546px">2018</div><div class="td" style="left:615px;top:546px">2018-04-01 00:00</div><div class="td" style="left:766px;top:546px">龚永成</div><div class="td" style="left:857px;top:546px"></div><div class="td" style="left:948px;top:546px">待缴费</div><div class="td num" style="left:1059px;top:546px">0</div><div class="td num" style="left:1150px;top:546px">0</div><div class="td num" style="left:1241px;top:546px">0</div><div class="td wait" style="left:1332px;top:546px">等待审核</div><div class="opbtn" style="left:1433px;top:553px">操作<i></i></div><div class="tr" style="top:585px;background:#f2f2f2"></div><div class="vl" style="left:49px;top:585px;height:38px;background:#ebebeb"></div><div class="vl" style="left:150px;top:585px;height:38px;background:#ebebeb"></div><div class="vl" style="left:488px;top:585px;height:38px;background:#ebebeb"></div><div class="vl" style="left:599px;top:585px;height:38px;background:#ebebeb"></div><div class="vl" style="left:750px;top:585px;height:38px;background:#ebebeb"></div><div class="vl" style="left:841px;top:585px;height:38px;background:#ebebeb"></div><div class="vl" style="left:932px;top:585px;height:38px;background:#ebebeb"></div><div class="vl" style="left:1043px;top:585px;height:38px;background:#ebebeb"></div><div class="vl" style="left:1134px;top:585px;height:38px;background:#ebebeb"></div><div class="vl" style="left:1225px;top:585px;height:38px;background:#ebebeb"></div><div class="vl" style="left:1316px;top:585px;height:38px;background:#ebebeb"></div><div class="vl" style="left:1417px;top:585px;height:38px;background:#ebebeb"></div><div class="vl" style="left:1518px;top:585px;height:38px;background:#ebebeb"></div><div class="hl" style="left:0;top:623px;width:1552px"></div><div class="chk" style="left:16px;top:595px"></div><div class="td nm" style="left:65px;top:585px">Tomy</div><div class="td" style="left:166px;top:585px">成人高考&gt;湖南农业大学&gt;专科&gt;学前教育</div><div class="td" style="left:504px;top:585px">2018</div><div class="td" style="left:615px;top:585px">2018-01-22 00:00</div><div class="td" style="left:766px;top:585px">龚小川</div><div class="td" style="left:857px;top:585px"></div><div class="td" style="left:948px;top:585px">待缴费</div><div class="td num" style="left:1059px;top:585px">0</div><div class="td num" style="left:1150px;top:585px">0</div><div class="td num" style="left:1241px;top:585px">0</div><div class="td wait" style="left:1332px;top:585px">等待审核</div><div class="opbtn" style="left:1433px;top:592px">操作<i></i></div><div class="tr" style="top:624px;background:#fff"></div><div class="vl" style="left:49px;top:624px;height:38px;background:#ebebeb"></div><div class="vl" style="left:150px;top:624px;height:38px;background:#ebebeb"></div><div class="vl" style="left:488px;top:624px;height:38px;background:#ebebeb"></div><div class="vl" style="left:599px;top:624px;height:38px;background:#ebebeb"></div><div class="vl" style="left:750px;top:624px;height:38px;background:#ebebeb"></div><div class="vl" style="left:841px;top:624px;height:38px;background:#ebebeb"></div><div class="vl" style="left:932px;top:624px;height:38px;background:#ebebeb"></div><div class="vl" style="left:1043px;top:624px;height:38px;background:#ebebeb"></div><div class="vl" style="left:1134px;top:624px;height:38px;background:#ebebeb"></div><div class="vl" style="left:1225px;top:624px;height:38px;background:#ebebeb"></div><div class="vl" style="left:1316px;top:624px;height:38px;background:#ebebeb"></div><div class="vl" style="left:1417px;top:624px;height:38px;background:#ebebeb"></div><div class="vl" style="left:1518px;top:624px;height:38px;background:#ebebeb"></div><div class="hl" style="left:0;top:662px;width:1552px"></div><div class="chk" style="left:16px;top:634px"></div><div class="td nm" style="left:65px;top:624px">Ellie</div><div class="td" style="left:166px;top:624px">成人高考&gt;湖南农业大学&gt;本科&gt;英语</div><div class="td" style="left:504px;top:624px">2018</div><div class="td" style="left:615px;top:624px">2018-01-01 00:00</div><div class="td" style="left:766px;top:624px">龚永成</div><div class="td" style="left:857px;top:624px"></div><div class="td" style="left:948px;top:624px">在读</div><div class="td num" style="left:1059px;top:624px">1</div><div class="td num" style="left:1150px;top:624px">0</div><div class="td num" style="left:1241px;top:624px">0</div><div class="td wait" style="left:1332px;top:624px">等待审核</div><div class="opbtn" style="left:1433px;top:631px">操作<i></i></div></div>

<!-- scrollbar -->
<div class="abs" style="left:1889px;top:227px;width:17px;height:641px;background:#f1f1f1"></div>
<div class="abs" style="left:1892px;top:244px;width:13px;height:500px;background:#c1c1c1"></div>
<div class="abs" style="left:1894px;top:233px;border-left:4px solid transparent;border-right:4px solid transparent;border-bottom:4px solid #a3a3a3"></div>
<div class="abs" style="left:1894px;top:857px;border-left:4px solid transparent;border-right:4px solid transparent;border-top:4px solid #505050"></div>

<!-- toolbar / pagination -->
<div class="abs" style="left:337px;top:868px;width:1569px;height:1px;background:#e6e6e6"></div>
<div class="btn" style="left:355px;top:876px;width:115px"><svg class="abs" style="left:19px;top:5px" width="17" height="17" viewBox="0 0 17 17"><circle cx="8.5" cy="8.5" r="7" fill="none" stroke="#555" stroke-width="1"/><path d="M8.5 4.5v7.5M5.5 9l3 3 3-3" fill="none" stroke="#555" stroke-width="1.1"/></svg><span class="abs" style="left:39px;top:1px">导出数据</span></div>
<div class="btn" style="left:480px;top:876px;width:115px"><svg class="abs" style="left:19px;top:5px" width="17" height="17" viewBox="0 0 17 17"><circle cx="8.5" cy="8.5" r="7" fill="none" stroke="#555" stroke-width="1"/><path d="M8.5 4.5v7.5M5.5 9l3 3 3-3" fill="none" stroke="#555" stroke-width="1.1"/></svg><span class="abs" style="left:39px;top:1px">附件导出</span></div>

<svg class="abs" style="left:1486px;top:881px" width="10" height="16" viewBox="0 0 10 16"><path d="M8 1L2 8l6 7" fill="none" stroke="#ccc" stroke-width="1.2"/></svg>
<div class="abs" style="left:1510px;top:876px;width:31px;height:26px;background:#009688;border-radius:2px;color:#fff;text-align:center;line-height:26px;font-size:12px">1</div>
<svg class="abs" style="left:1554px;top:881px" width="10" height="16" viewBox="0 0 10 16"><path d="M2 1l6 7-6 7" fill="none" stroke="#ccc" stroke-width="1.2"/></svg>
<div class="abs" style="left:1579px;top:876px;line-height:26px;font-size:12px;color:#999">到第</div>
<div class="abs" style="left:1613px;top:876px;width:40px;height:26px;border:1px solid #e6e6e6;border-radius:2px;text-align:center;line-height:24px;font-size:12px;color:#333">1</div>
<div class="abs" style="left:1663px;top:876px;line-height:26px;font-size:12px;color:#999">页</div>
<div class="abs" style="left:1685px;top:876px;width:46px;height:26px;border:1px solid #e6e6e6;border-radius:2px;text-align:center;line-height:24px;font-size:12px;color:#333">确定</div>
<div class="abs" style="left:1741px;top:876px;line-height:26px;font-size:12px;color:#666">共 20 条</div>
<div class="abs" style="left:1795px;top:876px;width:81px;height:26px;border:1px solid #e6e6e6;border-radius:2px;line-height:24px;font-size:12px;color:#333;padding-left:7px">20 条/页</div>
<div class="abs" style="left:1861px;top:885px;border-left:3.5px solid transparent;border-right:3.5px solid transparent;border-top:7px solid #000"></div>

<div id="foot"></div>
<!-- footer icons -->
<svg class="abs" style="left:1712px;top:927px" width="16" height="16" viewBox="0 0 16 16"><path d="M14.5 1.5c-3.5 0-6.5 2-8.5 5l-2.5.5-1.5 2 3 .5 2 2 .5 3 2-1.5.5-2.5c3-2 5-5 5-8.5z" fill="none" stroke="#555" stroke-width="1.3" stroke-linejoin="round"/><circle cx="10.5" cy="5.5" r="1.2" fill="#555"/><path d="M4.5 11.5L1.5 14.5" stroke="#555" stroke-width="1.4"/></svg>
<svg class="abs" style="left:1748px;top:927px" width="16" height="16" viewBox="0 0 16 16"><circle cx="8.5" cy="9" r="5.3" fill="none" stroke="#555" stroke-width="1.2"/><path d="M8.5 6v6M5.5 9h6" stroke="#555" stroke-width="1.2"/><path d="M1.2 13C1 8 4 2.5 10.5 1.2" fill="none" stroke="#555" stroke-width="1.2"/></svg>
<svg class="abs" style="left:1785px;top:927px" width="14" height="16" viewBox="0 0 14 16"><path d="M0.5 3.5h13M4.5 3.5V1.3h5v2.2M2 3.5v11.5h10V3.5M5.2 6.5v6M8.8 6.5v6" fill="none" stroke="#555" stroke-width="1.3"/></svg>
<svg class="abs" style="left:1819px;top:928px" width="16" height="14" viewBox="0 0 16 14"><path d="M1 4.5h3l4.5-3.8v12.6L4 9.5H1z" fill="none" stroke="#555" stroke-width="1.3" stroke-linejoin="round"/><path d="M10.5 5a2.5 2.5 0 0 1 0 4M12.5 2.5a6 6 0 0 1 0 9" fill="none" stroke="#555" stroke-width="1.3"/></svg>
<svg class="abs" style="left:1857px;top:928px" width="14" height="14" viewBox="0 0 14 14"><path d="M4.5 0.8h8.7v8.7H4.5zM0.8 4.5v8.7h8.7" fill="none" stroke="#555" stroke-width="1.3"/></svg>
<svg class="abs" style="left:1893px;top:929px" width="14" height="14" viewBox="0 0 14 14"><circle cx="6" cy="6" r="4.8" fill="none" stroke="#555" stroke-width="1.3"/><path d="M9.5 9.5l3.5 3.5" stroke="#555" stroke-width="1.4"/></svg>
</body></html>
